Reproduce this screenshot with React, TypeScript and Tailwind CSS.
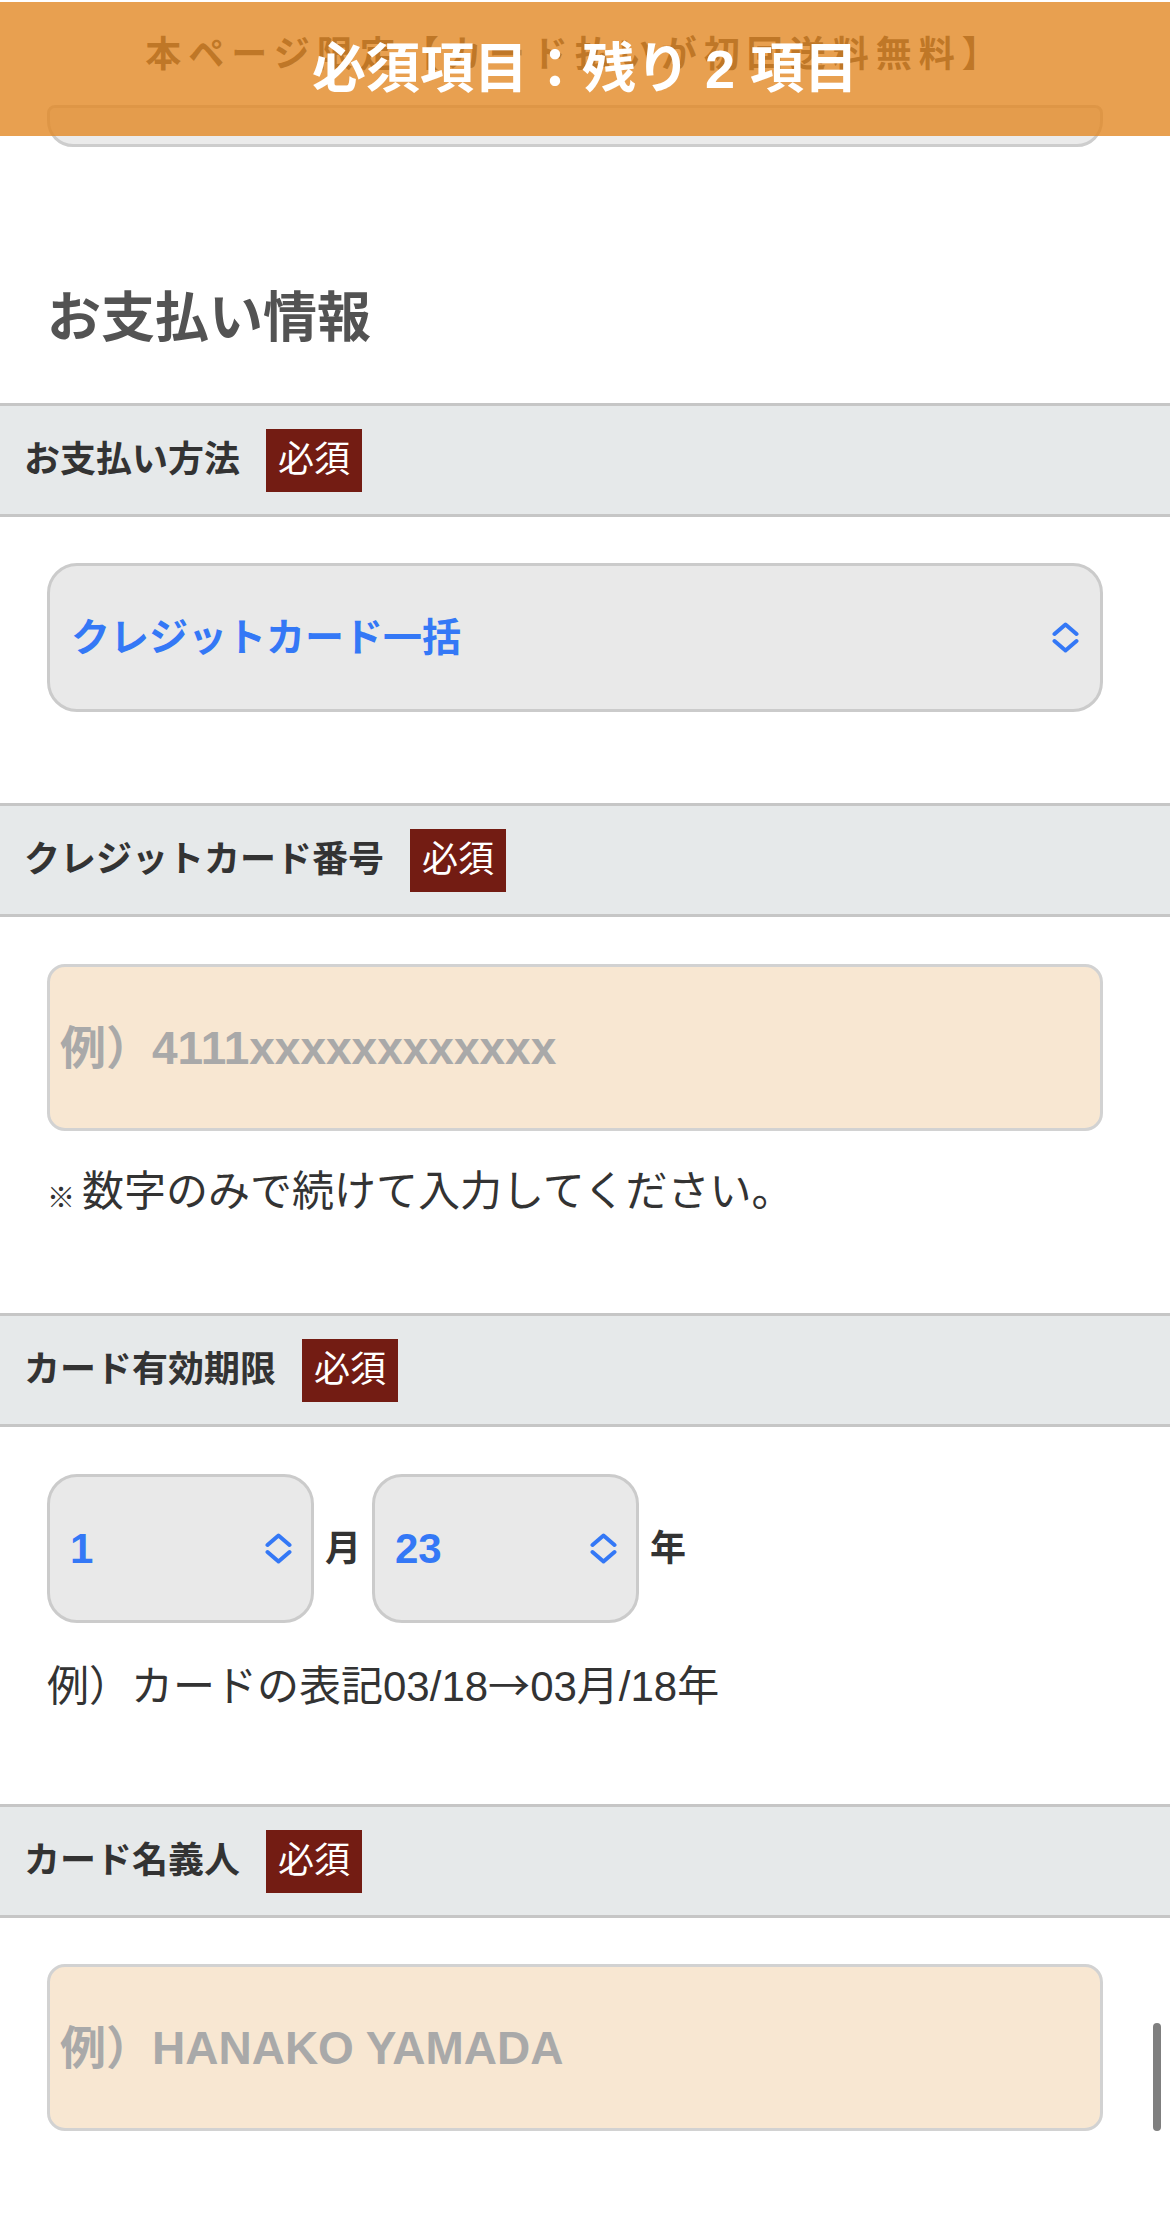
import React from "react";

function Chevron() {
  return (
    <svg width="27" height="31" viewBox="0 0 27 31" fill="none" stroke="#3478f6" strokeWidth="4" strokeLinecap="round" strokeLinejoin="round">
      <path d="M2.5 12 L13.5 2.5 L24.5 12" />
      <path d="M2.5 19 L13.5 28.5 L24.5 19" />
    </svg>
  );
}

function Bar({ label }: { label: string }) {
  return (
    <div className="h-[114px] border-y-[3px] border-[#c6c6c6] bg-[#e6e9ea] flex items-center pl-[24px] gap-[26px]">
      <span className="text-[36px] font-bold text-[#333333] leading-none">{label}</span>
      <span className="h-[63px] px-[12px] bg-[#731c13] text-white text-[36px] leading-none flex items-center">必須</span>
    </div>
  );
}

export default function App() {
  return (
    <div className="relative w-[1170px] min-h-[2232px] bg-white overflow-hidden font-['Liberation_Sans','Noto_Sans_CJK_JP',sans-serif]">
      {/* content partially hidden under the sticky banner */}
      <div className="h-[147px] flex flex-col items-start">
        <div className="h-[105px] ml-[47px] w-[1056px] flex justify-center pt-[37px]">
          <span className="text-[36px] font-bold leading-[36px] tracking-[7px] text-[#333333]">本ページ限定【カード払いが初回送料無料】</span>
        </div>
        <div className="h-[42px] ml-[47px] w-[1056px] rounded-b-[26px] rounded-t-[8px] border-[3px] border-[#cdcdcd] bg-[#ebebeb]" />
      </div>

      {/* sticky banner */}
      <div className="absolute left-0 top-[2px] w-full h-[134px] bg-[rgba(226,136,36,0.8)] flex items-center justify-center">
        <span className="text-white text-[54px] font-bold leading-none">必須項目：残り 2 項目</span>
      </div>

      <h2 className="mt-[131px] mb-[44px] pl-[47px] text-[54px] leading-[81px] font-bold text-[#535353]">お支払い情報</h2>

      {/* お支払い方法 */}
      <Bar label="お支払い方法" />
      <div className="pt-[46px] pb-[91px]">
        <div className="ml-[47px] w-[1056px] h-[149px] rounded-[30px] border-[3px] border-[#cbcbcb] bg-[#e9e9e9] flex items-center justify-between pl-[21px] pr-[21px]">
          <span className="text-[39px] font-bold text-[#3478f6] leading-none">クレジットカード一括</span>
          <Chevron />
        </div>
      </div>

      {/* クレジットカード番号 */}
      <Bar label="クレジットカード番号" />
      <div className="pt-[47px] pb-[90px]">
        <div className="ml-[47px] w-[1056px] h-[167px] rounded-[18px] border-[3px] border-[#d2d2d2] bg-[#f8e7d2] flex items-center pl-[10px]">
          <span className="text-[46px] font-bold text-[#a9a9a9] leading-none">例）4111xxxxxxxxxxxx</span>
        </div>
        <p className="mt-[29px] h-[63px] pl-[47px] text-[42px] leading-[63px] text-[#333333] flex items-center">
          <span className="text-[28px] leading-none mr-[7px] mt-[8px] font-['Noto_Sans_CJK_JP',sans-serif]">※</span>
          <span className="leading-none">数字のみで続けて入力してください。</span>
        </p>
      </div>

      {/* カード有効期限 */}
      <Bar label="カード有効期限" />
      <div className="pt-[47px] pb-[90px]">
        <div className="pl-[47px] flex items-center gap-[11px]">
          <div className="w-[267px] h-[149px] rounded-[30px] border-[3px] border-[#cbcbcb] bg-[#e9e9e9] flex items-center justify-between pl-[20px] pr-[19px]">
            <span className="text-[42px] font-semibold text-[#3478f6] leading-none">1</span>
            <Chevron />
          </div>
          <span className="text-[36px] font-bold text-[#333333] leading-none">月</span>
          <div className="w-[267px] h-[149px] rounded-[30px] border-[3px] border-[#cbcbcb] bg-[#e9e9e9] flex items-center justify-between pl-[20px] pr-[19px]">
            <span className="text-[42px] font-semibold text-[#3478f6] leading-none">23</span>
            <Chevron />
          </div>
          <span className="text-[36px] font-bold text-[#333333] leading-none">年</span>
        </div>
        <p className="mt-[28px] h-[63px] pl-[47px] text-[42px] leading-[63px] text-[#333333]">
          例）カードの表記03/18<span className="font-['Noto_Sans_CJK_JP',sans-serif]">→</span>03月/18年
        </p>
      </div>

      {/* カード名義人 */}
      <Bar label="カード名義人" />
      <div className="pt-[46px] pb-[100px]">
        <div className="ml-[47px] w-[1056px] h-[167px] rounded-[18px] border-[3px] border-[#d2d2d2] bg-[#f8e7d2] flex items-center pl-[10px]">
          <span className="text-[46px] font-bold text-[#a9a9a9] leading-none">例）HANAKO YAMADA</span>
        </div>
      </div>

      {/* scroll indicator */}
      <div className="absolute left-[1153px] top-[2023px] w-[8px] h-[108px] rounded-full bg-[#7f7f7f]" />
    </div>
  );
}
